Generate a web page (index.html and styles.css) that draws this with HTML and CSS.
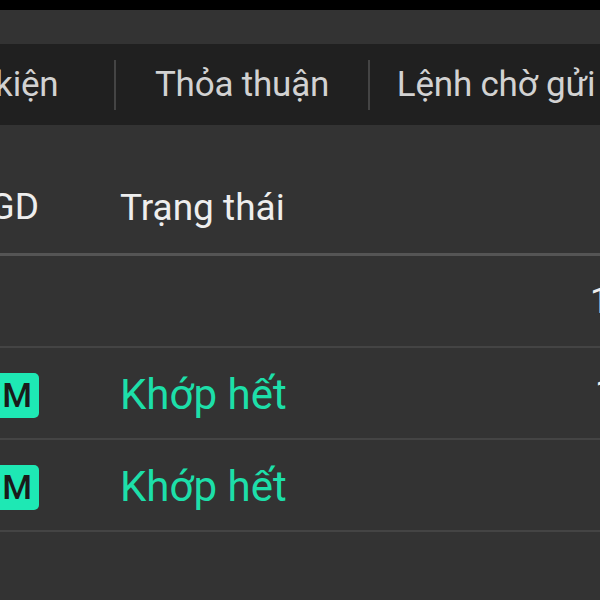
FILE: index.html
```html
<!DOCTYPE html>
<html lang="vi">
<head>
<meta charset="utf-8">
<link rel="stylesheet" href="styles.css">
</head>
<body>
<div class="screen">
  <div class="statusbar"></div>
  <div class="topgap"></div>
  <nav class="tabs">
    <div class="tab">Điều kiện</div>
    <span class="sep"></span>
    <div class="tab">Thỏa thuận</div>
    <span class="sep"></span>
    <div class="tab">Lệnh chờ gửi</div>
  </nav>
  <div class="midgap"></div>
  <div class="table">
    <div class="row head">
      <div class="c1">Kênh GD</div>
      <div class="c2">Trạng thái</div>
      <div class="c3"></div>
    </div>
    <div class="row">
      <div class="c1"></div>
      <div class="c2"></div>
      <div class="c3 num">1,000</div>
    </div>
    <div class="row">
      <div class="c1"><span class="badge">M</span></div>
      <div class="c2 ok">Khớp hết</div>
      <div class="c3 num shift">1,000</div>
    </div>
    <div class="row">
      <div class="c1"><span class="badge">M</span></div>
      <div class="c2 ok">Khớp hết</div>
      <div class="c3 num"></div>
    </div>
  </div>
</div>
</body>
</html>
```

FILE: styles.css
```css
html, body {
  margin: 0;
  padding: 0;
  background: #333333;
  overflow: hidden;
}
.screen {
  width: 600px;
  height: 600px;
  overflow: hidden;
  font-family: Roboto, "Noto Sans", sans-serif;
  background: #333333;
}
.statusbar {
  height: 10px;
  background: #000000;
}
.topgap {
  height: 34px;
  background: #333333;
}
.tabs {
  height: 81px;
  background: #202020;
  display: flex;
  align-items: center;
  margin-left: -138px;
  width: 900px;
}
.tab {
  flex: 0 0 252px;
  text-align: center;
  color: #d2d2d2;
  font-size: 35px;
  letter-spacing: -0.2px;
  white-space: nowrap;
}
.sep {
  flex: 0 0 2px;
  height: 50px;
  background: #444444;
}
.midgap {
  height: 30px;
  background: #333333;
}
.row {
  display: grid;
  grid-template-columns: 120px 470px 200px;
  height: 90px;
  align-items: center;
  border-bottom: 2px solid #444444;
  width: 790px;
}
.row.head {
  height: 94px;
  padding-top: 4px;
  border-bottom: 3px solid #555555;
  color: #eeeeee;
  font-size: 37px;
}
.c1 {
  display: flex;
  justify-content: flex-end;
  padding-right: 81px;
  white-space: nowrap;
}
.c2 {
  white-space: nowrap;
  padding-top: 3px;
}
.c3 {
  white-space: nowrap;
  color: #eeeeee;
  font-size: 36px;
}
.shift {
  padding-left: 5px;
}
.badge {
  display: inline-block;
  background: #1ee8b4;
  color: #1a1a1a;
  font-weight: 500;
  font-size: 34px;
  line-height: 45px;
  margin-top: 4px;
  padding: 0 7px 0 30px;
  border-radius: 5px;
}
.ok {
  color: #1ddfa9;
  font-size: 42px;
}
```
